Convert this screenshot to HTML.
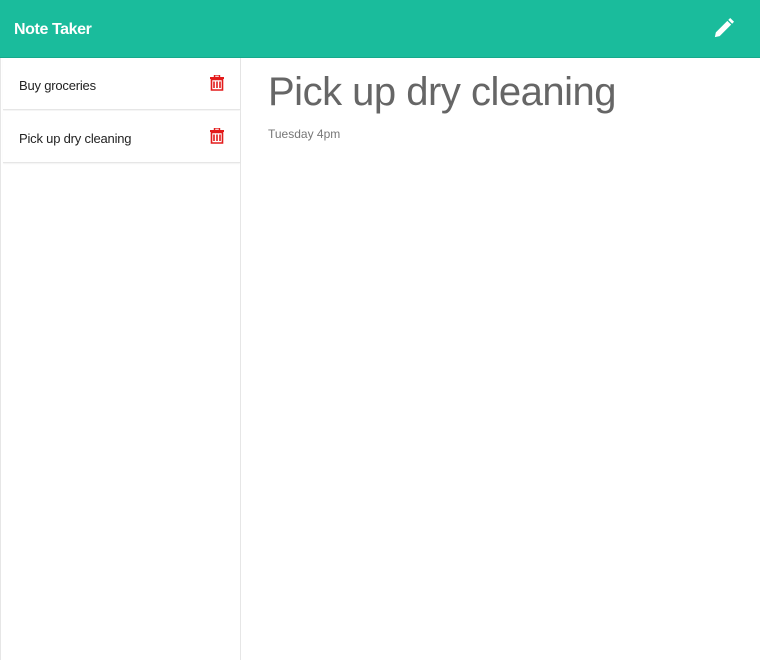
<!DOCTYPE html>
<html><head><style>
*{box-sizing:border-box;margin:0;padding:0}
body{width:760px;height:660px;background:#fff;font-family:"Liberation Sans",sans-serif;position:relative;overflow:hidden}
.hdr{position:absolute;left:0;top:0;width:760px;height:58px;background:#1abc9c;border-bottom:1px solid #17a98c}
.hdr .t{position:absolute;left:14px;top:21px;color:#fff;font-size:16px;font-weight:bold;letter-spacing:-0.4px}
.side{position:absolute;left:0;top:58px;width:241px;height:602px;border-right:1px solid #e6e6e6;border-left:1px solid #e6e6e6}
.item{position:absolute;left:2px;width:237px;height:52px;border-bottom:1px solid #e6e6e6;background:#fff;box-shadow:0 1px 1px rgba(0,0,0,.05)}
.item span{position:absolute;left:16px;top:20px;font-size:13px;color:#222;letter-spacing:-0.2px}
.item svg{position:absolute;left:207px;top:17px}
h1{position:absolute;left:268px;top:70px;font-size:40px;font-weight:normal;color:#666;letter-spacing:-0.5px}
.d{position:absolute;left:268px;top:127px;font-size:12px;color:#777}
</style></head><body>
<div class="hdr"><div class="t">Note Taker</div>
<svg style="position:absolute;left:712px;top:17px" width="23" height="23" viewBox="0 0 24 24"><path d="M3 21 L4 16 L16 4 L20 8 L8 20 Z" fill="#fff"/><path d="M17 3 L19 1 L23 5 L21 7 Z" fill="#fff"/></svg>
</div>
<div class="side">
<div class="item" style="top:0"><span>Buy groceries</span><svg width="14" height="16" viewBox="0 0 14 16"><rect x="0" y="2" width="14" height="2" fill="#e31b1b"/><rect x="4.5" y="0" width="5" height="2.5" fill="none" stroke="#e31b1b" stroke-width="1.4"/><path d="M1.5 4.5 H12.5 V15 H1.5 Z M4 6.5 V13 M7 6.5 V13 M10 6.5 V13" fill="none" stroke="#e31b1b" stroke-width="1.6"/></svg></div>
<div class="item" style="top:53px"><span>Pick up dry cleaning</span><svg width="14" height="16" viewBox="0 0 14 16"><rect x="0" y="2" width="14" height="2" fill="#e31b1b"/><rect x="4.5" y="0" width="5" height="2.5" fill="none" stroke="#e31b1b" stroke-width="1.4"/><path d="M1.5 4.5 H12.5 V15 H1.5 Z M4 6.5 V13 M7 6.5 V13 M10 6.5 V13" fill="none" stroke="#e31b1b" stroke-width="1.6"/></svg></div>
</div>
<h1>Pick up dry cleaning</h1>
<div class="d">Tuesday 4pm</div>
</body></html>
